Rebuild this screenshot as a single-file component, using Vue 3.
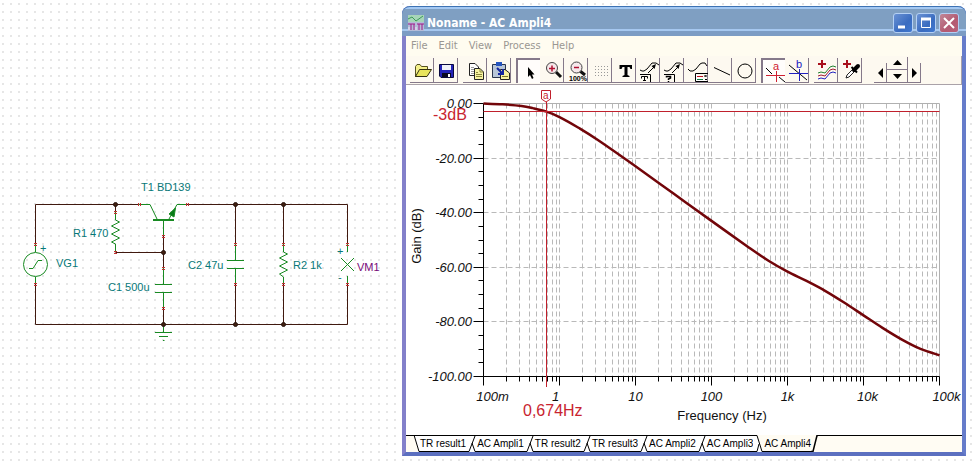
<script setup>
const menus = ['File', 'Edit', 'View', 'Process', 'Help']
const tabs = ['TR result1', 'AC Ampli1', 'TR result2', 'TR result3', 'AC Ampli2', 'AC Ampli3', 'AC Ampli4']
const activeTab = tabs.length - 1

// Plot frame, in drawing units
const left = 483.5
const right = 939.5
const top = 103.5
const bottom = 376.5
const decade = 76
const xOf = (d) => left + d * decade
const yOf = (db) => top - (db * (bottom - top)) / 100

const minorX = []
for (let d = 0; d < 6; d++) {
  for (let m = 2; m < 10; m++) minorX.push(Math.floor(xOf(d + Math.log10(m))) + 0.5)
}
const majorX = ['100m', '1', '10', '100', '1k', '10k', '100k'].map((label, d) => ({ label, x: xOf(d) }))
const majorY = [0, -20, -40, -60, -80, -100].map((v) => ({
  label: v.toFixed(2),
  y: Math.floor(yOf(v)) + 0.5,
}))
const minorY = []
for (let v = -5; v > -100; v -= 5) if (v % 20) minorY.push(Math.floor(yOf(v)) + 0.5)

// Gain samples: [decades above 100 mHz, dB]
const samples = [
  [0, 0], [0.25, -0.3], [0.5, -0.9], [0.65, -1.7], [0.83, -3], [1, -5], [1.25, -8.9], [1.5, -13.3],
  [2, -23], [2.5, -33], [3, -43], [3.5, -52.9], [3.75, -57.6], [4, -61.6], [4.25, -65],
  [4.5, -68.7], [4.75, -73], [5, -77.6], [5.25, -82.2], [5.5, -86.4], [5.75, -89.9], [6, -92.2],
]
const pts = samples.map(([d, g]) => [xOf(d), yOf(g)])
let curve = `M${pts[0]}`
for (let i = 0; i < pts.length - 1; i++) {
  const a = pts[i - 1] || pts[i]
  const b = pts[i]
  const c = pts[i + 1]
  const d = pts[i + 2] || c
  curve += `C${b[0] + (c[0] - a[0]) / 6},${b[1] + (c[1] - a[1]) / 6} ${c[0] - (d[0] - b[0]) / 6},${c[1] - (d[1] - b[1]) / 6} ${c[0]},${c[1]}`
}

// Schematic terminals and junctions
const terminals = [
  [139, 204, 'h'], [187, 204, 'h'], [115, 212, 'v'], [115, 252, 'v'], [163, 236, 'v'], [163, 268, 'v'],
  [163, 308, 'v'], [35, 244, 'v'], [35, 284, 'v'], [235, 244, 'v'], [235, 284, 'v'],
  [283, 244, 'v'], [283, 284, 'v'], [347, 244, 'v'], [347, 284, 'v'],
]
const joints = [[115, 204], [163, 252], [163, 324], [235, 204], [235, 324], [283, 204], [283, 324]]
</script>

<template>
  <main class="sheet">
    <svg class="schematic" viewBox="0 0 402 464" role="img" aria-label="Schematic">
      <g class="wire">
        <path d="M35.5 244V204.5H139M35.5 284V324.5H347.5V284M187 204.5H347.5V244M115.5 204V212M115.5 252.5H163.5M163.5 236V268M163.5 308V324M235.5 204V244M235.5 284V324M283.5 204V244M283.5 284V324" />
      </g>
      <g class="part">
        <path d="M35.5 244V252M35.5 277V284" />
        <circle cx="35.5" cy="264.5" r="12" />
        <path d="M29 268.5H33L38 260.5H42" />
        <path d="M139 204.5H150L157.5 220M177 204.5H187M177 204.5L169 219M163.5 220V236" />
        <path class="bar" d="M153 220H174" />
        <path class="solid" d="M175.5 208L169 214L174 217Z" />
        <path d="M115.5 212V220L119.5 222L111.5 226L119.5 230L111.5 234L119.5 238L111.5 242L115.5 244V252" />
        <path d="M163.5 268V284.5M155 284.5H172M155 292.5H172M163.5 292.5V308" />
        <path d="M163.5 324V332.5M155 332.5H172M159 336.5H168M163 340.5H164.5" />
        <path d="M235.5 244V260.5M227 260.5H244M227 268.5H244M235.5 268.5V284" />
        <path d="M283.5 244V252L287.5 254L279.5 258L287.5 262L279.5 266L287.5 270L279.5 274L283.5 277V284" />
        <path d="M347.5 244V252M347.5 276V284M341 258L354 271M354 258L341 271" />
      </g>
      <g class="terminal">
        <template v-for="(t, i) in terminals" :key="i">
          <path v-if="t[2] === 'v'" :d="`M${t[0] - 1} ${t[1] - 0.5}h3M${t[0] - 1} ${t[1] + 1.5}h3`" />
          <path v-else :d="`M${t[0] - 0.5} ${t[1] - 1}v3M${t[0] + 1.5} ${t[1] - 1}v3`" />
        </template>
      </g>
      <circle v-for="(j, i) in joints" :key="i" class="joint" :cx="j[0] + 0.5" :cy="j[1] + 0.5" r="2" />
      <g class="name">
        <text x="141" y="191">T1 BD139</text>
        <text x="73" y="237">R1 470</text>
        <text x="56" y="267">VG1</text>
        <text x="108" y="291">C1 500u</text>
        <text x="188" y="269">C2 47u</text>
        <text x="293" y="269">R2 1k</text>
        <text x="357" y="271" class="meter">VM1</text>
        <text x="40" y="252">+</text>
        <text x="337" y="255">+</text>
        <text x="338" y="281">-</text>
      </g>
    </svg>

    <section class="window">
      <header class="title">
        <svg class="app-icon" viewBox="0 0 16 16">
          <rect width="16" height="16" fill="#b5bcd8" />
          <path d="M0 0H16V7H0Z" fill="#a7d5b8" />
          <path d="M0 4L4 2L8 6L15 1" fill="none" stroke="#3c9a58" />
          <path d="M0 9H7M9 9H16M3 9V15M6 9V15M11 9V15M14 9V15" fill="none" stroke="#a01888" />
          <path d="M1 12V15M8 12V15" stroke="#f0e8f8" />
        </svg>
        <h1>Noname - AC Ampli4</h1>
        <button class="sys" aria-label="Minimize"><svg viewBox="0 0 18 18"><path d="M4 13H11" stroke="#fff" stroke-width="3" /></svg></button>
        <button class="sys" aria-label="Maximize"><svg viewBox="0 0 18 18"><path d="M4.5 4V13.5H13.5V4" fill="none" stroke="#fff" /><path d="M4 5H14" stroke="#fff" stroke-width="3" /></svg></button>
        <button class="sys close" aria-label="Close"><svg viewBox="0 0 18 18"><path d="M4 4L14 14M14 4L4 14" stroke="#fff" stroke-width="2" /></svg></button>
      </header>

      <nav class="menu"><button v-for="m in menus" :key="m">{{ m }}</button></nav>

      <div class="toolbar">
        <div class="group">
          <button aria-label="Open"><svg viewBox="0 0 24 24"><path d="M5.5 19V8.5L7 6.5H10L11.5 8.5H17.5V11.5" fill="#f4f08a" stroke="#555020" /><path d="M5.5 18.5L9.5 11.5H21.5L17 18.5Z" fill="#e8e45c" stroke="#333010" /></svg></button>
          <button aria-label="Save"><svg viewBox="0 0 24 24"><path d="M5.5 6.5H19.5V19.5H7L5.5 18Z" fill="#2323b8" stroke="#080840" /><path d="M8 7H17V12H8Z" fill="#eef0f8" /><path d="M8 15H17V19H8Z" fill="#080820" /><path d="M14 16H16V19H14Z" fill="#fff" /></svg></button>
        </div>
        <div class="group">
          <button aria-label="Copy"><svg viewBox="0 0 24 24"><path d="M6.5 5.5H12L15.5 9V17.5H6.5Z" fill="#fff" stroke="#222" /><path d="M8 9.5H11M8 11.5H13M8 13.5H13M8 15.5H12" stroke="#999" /><path d="M11.5 10.5H17L20.5 14V21.5H11.5Z" fill="#f7f3a0" stroke="#222" /><path d="M17 10.5V14H20.5M13 14.5H15M13 16.5H19M13 18.5H19" fill="none" stroke="#88853c" /></svg></button>
          <button aria-label="Paste"><svg viewBox="0 0 24 24"><path d="M5.5 6.5H18.5V19.5H5.5Z" fill="#b8c6d8" stroke="#29354f" /><path d="M9 4H15V8H9Z" fill="#2555c0" /><path d="M13.5 11.5H18L22.5 15V21.5H13.5Z" fill="#f7f3a0" stroke="#222" /><path d="M15 18.5H21" stroke="#77742c" /><path d="M10 10L16 16M16 11V16H11" fill="none" stroke="#1225a0" stroke-width="2" /></svg></button>
        </div>
        <div class="group">
          <button class="on" aria-label="Select"><svg viewBox="0 0 24 24"><path d="M12 8V18L14 16L16 20L17.5 19L16 15.5H18.5Z" fill="#000" /></svg></button>
          <button aria-label="Zoom in"><svg viewBox="0 0 24 24"><path d="M16 14L21 19" stroke="#111" stroke-width="3" /><circle cx="12" cy="10" r="5.5" fill="#f6e8ea" stroke="#444" /><path d="M9 10.5H15M12 7.5V13.5" stroke="#b01030" stroke-width="1.5" /></svg></button>
          <button aria-label="Zoom 100%"><svg viewBox="0 0 24 24"><path d="M16 13L21 17" stroke="#111" stroke-width="3" /><circle cx="12.5" cy="9.5" r="5.5" fill="#f6e8ea" stroke="#444" /><path d="M10 9.5H15" stroke="#b01030" stroke-width="1.5" /><text x="5" y="23" class="tiny">100%</text></svg></button>
          <button aria-label="Grid"><svg viewBox="0 0 24 24"><path d="M7 8.5H21M7 11.5H21M7 14.5H21M7 17.5H21" stroke="#999" stroke-dasharray="1 2" /></svg></button>
          <button aria-label="Text"><svg viewBox="0 0 24 24"><path d="M7.5 7H20V11H18.5L17.5 9H15.5V17L17.5 18V19H10.5V18L12.5 17V9H10.5L9.5 11H7.5Z" fill="#000" /></svg></button>
          <button aria-label="Curve label"><svg viewBox="0 0 24 24"><path d="M4 12L6 13H8L11 11L16 5H20L23 7" fill="none" stroke="#000" /><path d="M12 15L19 8" stroke="#000" /><path d="M20 6L15.5 8L18.5 11Z" /><path d="M4 16.5H14.5V24" fill="none" stroke="#000" /><path d="M5.5 20.5V18.5H11.5V20.5M8.5 18.5V22.5M7 22.5H10" fill="none" stroke="#000" /></svg></button>
          <button aria-label="Curve query"><svg viewBox="0 0 24 24"><path d="M4 12L6 13H8L11 11L16 5H20L23 7" fill="none" stroke="#000" /><path d="M12 15L19 8" stroke="#000" /><path d="M20 6L15.5 8L18.5 11Z" /><path d="M4 16.5H14.5V24" fill="none" stroke="#000" /><path d="M6.5 19.5V18.5H10.5V20L8.5 21V22M8.5 23V24" fill="none" stroke="#000" stroke-width="1.5" /></svg></button>
          <button aria-label="Legend"><svg viewBox="0 0 24 24"><path d="M4 11L6 13H9L12 11L16 6L18 5H21L23 8" fill="none" stroke="#000" /><path d="M11.5 15.5H24M11.5 15.5V23.5H24" fill="#fff" stroke="#000" /><path d="M13 18.5H19" stroke="#c01020" /><path d="M13 21.5H19" stroke="#108040" /><path d="M20.5 17L22.5 19M22.5 17L20.5 19M21 21.5H23" stroke="#000" /></svg></button>
          <button aria-label="Line"><svg viewBox="0 0 24 24"><path d="M6 9.5L22 17" stroke="#000" /></svg></button>
          <button aria-label="Circle"><svg viewBox="0 0 24 24"><circle cx="13" cy="13" r="7" fill="none" stroke="#000" /></svg></button>
        </div>
        <div class="group">
          <button class="on" aria-label="Cursor a"><svg viewBox="0 0 24 24"><path d="M5 9L11 15M18 18L24 23" stroke="#000" /><path d="M5 16.5H24M15.5 12V23" stroke="#d02030" /><text x="12" y="11" class="letter a">a</text></svg></button>
          <button aria-label="Cursor b"><svg viewBox="0 0 24 24"><path d="M4 7L22 22" stroke="#000" /><path d="M4 15.5H23M14.5 11V23" stroke="#2020c0" /><text x="11" y="10" class="letter b">b</text></svg></button>
        </div>
        <div class="group">
          <button aria-label="Add curves"><svg viewBox="0 0 24 24"><path d="M4 6H12M8 2V10" stroke="#a8101c" stroke-width="2" /><path d="M4 15L7 14L11 15L16 9L19 8L22 9" fill="none" stroke="#208030" /><path d="M4 18L7 17L11 18L16 12L19 11L22 12" fill="none" stroke="#a01830" /><path d="M4 21L7 20L11 21L16 15L19 14L22 15" fill="none" stroke="#2020c0" /></svg></button>
          <button aria-label="Pick curve"><svg viewBox="0 0 24 24"><path d="M5 6H13M9 2V10" stroke="#a8101c" stroke-width="2" /><path d="M8 20L9 17L15 11L17 13L11 19Z" fill="#fff" stroke="#222" /><path d="M13.5 9L19 14.5" stroke="#000" stroke-width="2" /><path d="M16 12L20 8" stroke="#000" stroke-width="4" stroke-linecap="round" /></svg></button>
        </div>
        <div class="group arrows">
          <button class="side" aria-label="Left"><svg viewBox="0 0 12 20"><path d="M9 5V15L4 10Z" /></svg></button>
          <div class="stack">
            <button aria-label="Up"><svg viewBox="0 0 20 12"><path d="M6 8H15L10.5 3Z" /></svg></button>
            <button aria-label="Down"><svg viewBox="0 0 20 12"><path d="M6 4H15L10.5 9Z" /></svg></button>
          </div>
          <button class="side" aria-label="Right"><svg viewBox="0 0 12 20"><path d="M4 5V15L9 10Z" /></svg></button>
        </div>
      </div>

      <svg class="chart" viewBox="406 85 556 350" role="img" aria-label="Gain (dB) against Frequency (Hz)">
        <g class="grid">
          <path v-for="x in minorX" :key="x" :d="`M${x} ${top}V${bottom}`" />
          <path v-for="m in majorX.slice(1, -1)" :key="m.x" :d="`M${m.x} ${top}V${bottom}`" />
          <path v-for="m in majorY.slice(1, -1)" :key="m.y" :d="`M${left} ${m.y}H${right}`" />
        </g>
        <path class="edge" :d="`M${left} ${top}H${right}V${bottom}`" />
        <g class="axis">
          <path :d="`M${left} ${top}V${bottom}H${right}`" />
          <path v-for="x in minorX" :key="x" :d="`M${x} ${bottom}v5`" />
          <path v-for="m in majorX" :key="m.x" :d="`M${m.x} ${bottom}v9`" />
          <path v-for="y in minorY" :key="y" :d="`M${left} ${y}h-5`" />
          <path v-for="m in majorY" :key="m.y" :d="`M${left} ${m.y}h-10`" />
        </g>
        <g class="tick y"><text v-for="m in majorY" :key="m.y" x="472" :y="m.y + 4.5">{{ m.label }}</text></g>
        <g class="tick x"><text v-for="(m, i) in majorX" :key="m.x" :x="m.x + (i === 0 ? 9 : i === 1 ? -4 : i === 6 ? 7 : i === 5 ? 4 : 0)" y="401">{{ m.label }}</text></g>
        <text class="caption" x="722" y="420">Frequency (Hz)</text>
        <text class="caption" transform="translate(421 236) rotate(-90)">Gain (dB)</text>
        <path class="gain" :d="curve" />
        <g class="cursor">
          <path :d="`M${left} 111.5H${right}`" />
          <path d="M546.5 102V387" />
          <path class="marker" d="M541.5 90.5H550.5V99L546 102L541.5 99Z" />
          <text x="543" y="99" class="flag">a</text>
          <text x="433" y="120">-3dB</text>
          <text x="523" y="416">0,674Hz</text>
        </g>
      </svg>

      <footer class="tabs">
        <span class="lead"></span>
        <svg class="slant" viewBox="0 0 7 17"><path d="M1 0L6 17H7V0Z" fill="#fff" /><path d="M0 .5H7M1 0L6 16.5H7" fill="none" stroke="#000" /></svg>
        <template v-for="(t, i) in tabs" :key="t">
          <button class="tab" :class="{ current: i === activeTab }">{{ t }}</button>
          <svg v-if="i < activeTab - 1" class="slant wide" viewBox="0 0 11 17"><path d="M0 0H11V17H0Z" fill="#fff" /><path d="M0 .5H11M0 16.5H3L9 1M6 8L9 16.5H11" fill="none" stroke="#000" /></svg>
          <svg v-else-if="i < activeTab" class="slant wide" viewBox="0 0 11 17"><path d="M0 0H4L9 17H0Z" fill="#fff" /><path d="M0 .5H4L9 16.5H11M0 16.5H4L6 9" fill="none" stroke="#000" /></svg>
          <svg v-else class="slant" viewBox="0 0 7 17"><path d="M0 16.5H2L6 .5H7" fill="none" stroke="#000" stroke-width="1.5" /></svg>
        </template>
        <span class="rest"></span>
      </footer>
    </section>
  </main>
</template>

<style>
body { margin: 0; }
</style>

<style scoped>
.sheet {
  display: grid;
  grid-template-columns: 402px minmax(0, 1fr);
  align-items: start;
  min-height: 100vh;
  padding-right: 8px;
  box-sizing: border-box;
  background: radial-gradient(circle at 3px 4px, #d8d8d8 0, #ececec 1px, transparent 1px) 0 0 / 8px 8px #fff;
  font-family: "Liberation Sans", Arial, sans-serif;
}
svg { display: block; }
button { margin: 0; padding: 0; border: 0; background: none; font: inherit; color: inherit; }

.schematic { width: 100%; }
.wire { fill: none; stroke: #40190f; }
.part { fill: none; stroke: #188a22; }
.part .bar { stroke-width: 2; }
.part .solid { fill: #087a18; }
.terminal { stroke: #c43030; }
.joint { fill: #40200f; stroke: #2a1510; }
.name { font-size: 11px; fill: #087878; }
.name .meter { fill: #780878; }

.window {
  margin-top: 6px;
  border: solid;
  border-width: 0 4px 4px;
  border-color: #7b78c6 #667cca #5c70c0 #8380ca;
  border-radius: 8px 8px 0 0;
  background: #fff;
}
.title {
  display: flex;
  align-items: center;
  gap: 3px;
  height: 30px;
  box-sizing: border-box;
  margin: 0 -4px;
  padding: 3px 7px 0 6px;
  border-top: 1px solid #3d72b4;
  border-radius: 8px 8px 0 0;
  background: linear-gradient(#a4c8f2 0 2px, #7f9fc2 2px 22px, #a6c8f0 22px 24px, #7c9cc4 24px);
  color: #fff;
}
.title h1 {
  flex: 1;
  margin: 0;
  font: bold 12px/16px "DejaVu Sans Condensed", "DejaVu Sans", sans-serif;
}
.app-icon { width: 16px; height: 16px; }
.sys {
  width: 20px;
  height: 20px;
  box-sizing: border-box;
  border: 1px solid #b4d0f4;
  border-radius: 3px;
  background: linear-gradient(135deg, #6a92d4, #3a6cc0 60%, #3f78d0);
}
.sys.close { background: linear-gradient(135deg, #c08898, #b45a72 60%, #b8627c); }

.menu {
  display: flex;
  gap: 11px;
  height: 20px;
  padding-left: 5px;
  background: #fffcf0;
  color: #9a9792;
  font: 11px/18px "DejaVu Sans Condensed", "DejaVu Sans", sans-serif;
}

.toolbar {
  display: flex;
  gap: 4px;
  height: 29px;
  box-sizing: border-box;
  padding: 2px 0 0 4px;
  border-right: 1px solid #aaa2a8;
  border-bottom: 1px solid #aaa2a8;
  background: #fdf9f0;
}
.group { display: flex; height: 25px; padding-right: 1px; }
.group button {
  width: 24px;
  height: 25px;
  box-sizing: border-box;
  border: solid #85798a;
  border-width: 0 1px 1px 0;
}
.group button svg { width: 24px; height: 24px; }
.group button.on { border-width: 2px 0 0 2px; background: #fffdfb; }
.group button.on svg { margin: -2px 0 0 -2px; }
.tiny { font-size: 7px; font-weight: bold; }
.letter { font-size: 11px; }
.letter.a { fill: #d02030; }
.letter.b { fill: #2020c0; }
.arrows { align-items: flex-end; margin-left: 7px; }
.group .side { width: 13px; height: 20px; }
.group .side svg { width: 12px; height: 20px; }
.stack { display: grid; }
.group .stack button { width: 21px; height: 13px; }
.group .stack svg { width: 20px; height: 12px; }

.chart { width: 100%; background: #fff; }
.grid { fill: none; stroke: #b9b9b9; stroke-dasharray: 5 3; }
.edge { fill: none; stroke: #b0b0b0; }
.axis { fill: none; stroke: #000; }
.tick { font-size: 13px; font-style: italic; fill: #111; }
.tick.y { text-anchor: end; }
.tick.x { text-anchor: middle; }
.caption { font-size: 13px; text-anchor: middle; fill: #111; }
.gain { fill: none; stroke: #720509; stroke-width: 2.5px; }
.cursor path { fill: none; stroke: #c0202c; }
.cursor .marker { fill: #fff; }
.cursor text { font-size: 16px; fill: #c82430; }
.cursor .flag { font-size: 10px; }

.tabs { display: flex; height: 17px; background: #fffcf3; font-size: 10px; }
.lead { width: 7px; border-top: 1px solid #000; }
.slant { flex: none; width: 7px; height: 17px; }
.slant.wide { width: 11px; }
.tab { border: solid #000; border-width: 1px 0; background: #fff; line-height: 15px; white-space: nowrap; }
.tab.current { border-top-color: #fffcf3; background: #fffcf3; }
.rest { flex: 1; border-top: 1px solid #000; }
</style>
